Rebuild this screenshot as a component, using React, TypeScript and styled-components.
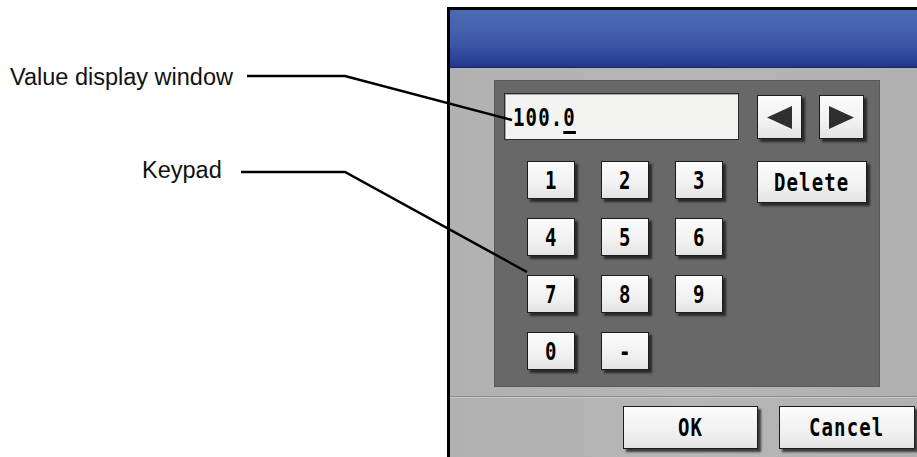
import styled, { createGlobalStyle } from "styled-components";

const GlobalStyle = createGlobalStyle`
  html, body {
    margin: 0;
    padding: 0;
    background: #ffffff;
  }
`;

const Page = styled.div`
  position: relative;
  display: flex;
  width: 917px;
  height: 457px;
  overflow: hidden;
  background: #ffffff;
`;

const LabelColumn = styled.div`
  display: flex;
  flex-direction: column;
  flex-shrink: 0;
  width: 447px;
  padding-top: 64px;
  box-sizing: border-box;
`;

const Label = styled.div<{ $indent: number; $gap?: number }>`
  margin-left: ${(p) => p.$indent}px;
  margin-top: ${(p) => p.$gap ?? 0}px;
  font-family: "Liberation Sans", Arial, sans-serif;
  font-size: 23.5px;
  line-height: 26px;
  color: #111111;
`;

const Leaders = styled.svg`
  position: absolute;
  left: 0;
  top: 0;
  pointer-events: none;
`;

const Device = styled.div`
  flex-shrink: 0;
  display: flex;
  flex-direction: column;
  width: 480px;
  height: 470px;
  margin-top: 7px;
  border-left: 3px solid #000000;
  border-top: 3px solid #000000;
  background: linear-gradient(90deg, #b1b1b1, #b6b6b6 50%, #b0b0b0);
`;

const Header = styled.div`
  height: 57px;
  background: linear-gradient(
    180deg,
    #4b6ab3 0%,
    #4462ae 35%,
    #3a53a3 65%,
    #23368f 100%
  );
  border-bottom: 1px solid #1b2660;
`;

const Body = styled.div`
  padding: 12px 0 0 44px;
`;

const Panel = styled.div`
  width: 386px;
  height: 307px;
  box-sizing: border-box;
  padding: 12px 0 0 9px;
  background: #686868;
  border: 1px solid #595959;
`;

const TopRow = styled.div`
  display: flex;
  align-items: flex-start;
  gap: 17px;
`;

// condensed LCD-style lettering used on the panel
const Glyphs = styled.span<{ $origin?: string }>`
  display: inline-block;
  font-family: "DejaVu Sans Mono", monospace;
  font-weight: bold;
  font-size: 25px;
  letter-spacing: 1.5px;
  white-space: pre;
  color: #000000;
  transform: scaleX(0.76);
  transform-origin: ${(p) => p.$origin ?? "center"};
`;

const ValueWindow = styled.div`
  display: flex;
  align-items: center;
  width: 235px;
  height: 47px;
  box-sizing: border-box;
  margin-right: 1px;
  padding: 2px 0 0 8px;
  background: #f3f4f2;
  border: 1px solid #2a2a2a;
  box-shadow: inset 1px 1px 0 #a8a8a8;
`;

const Cursor = styled.span`
  text-decoration: underline;
  text-decoration-thickness: 3px;
  text-underline-offset: 5px;
`;

const Key = styled.button<{ $w?: number; $h?: number }>`
  display: flex;
  align-items: center;
  justify-content: center;
  width: ${(p) => p.$w ?? 48}px;
  height: ${(p) => p.$h ?? 38}px;
  padding: 0;
  box-sizing: border-box;
  background: linear-gradient(180deg, #fbfbfb 0%, #f1f1f1 60%, #e3e3e3 100%);
  border: 1px solid #1c1c1c;
  border-radius: 0;
  box-shadow: 3px 3px 2px rgba(20, 20, 20, 0.75);
`;

const ArrowKey = styled(Key)`
  margin-top: 2px;
`;

const Keypad = styled.div`
  display: grid;
  grid-template-columns: 48px 48px 48px 118px;
  grid-auto-rows: 39px;
  column-gap: 26px;
  row-gap: 18px;
  margin: 21px 0 0 23px;
`;

const DeleteKey = styled(Key)`
  justify-self: end;
  align-self: start;
`;

const Separator = styled.div`
  margin-top: 9px;
  height: 0;
  border-top: 1px solid #8c8c8c;
  border-bottom: 1px solid #c8c8c8;
`;

const Footer = styled.div`
  display: flex;
  gap: 21px;
  padding: 8px 0 0 173px;
`;

function Triangle({ dir }: { dir: "left" | "right" }) {
  const points = dir === "left" ? "25,0 25,23 0,11.5" : "0,0 0,23 25,11.5";
  return (
    <svg width="25" height="23" viewBox="0 0 25 23">
      <polygon points={points} fill="#2f2f2f" />
    </svg>
  );
}

const digits = ["1", "2", "3", "4", "5", "6", "7", "8", "9", "0", "-"];

export default function App() {
  return (
    <>
      <GlobalStyle />
      <Page>
        <LabelColumn>
          <Label $indent={10}>Value display window</Label>
          <Label $indent={142} $gap={67}>
            Keypad
          </Label>
        </LabelColumn>
        <Device>
          <Header />
          <Body>
            <Panel>
              <TopRow>
                <ValueWindow>
                  <Glyphs $origin="left">
                    100.<Cursor>0</Cursor>
                  </Glyphs>
                </ValueWindow>
                <ArrowKey $w={45} $h={44}>
                  <Triangle dir="left" />
                </ArrowKey>
                <ArrowKey $w={45} $h={44}>
                  <Triangle dir="right" />
                </ArrowKey>
              </TopRow>
              <Keypad>
                {digits.slice(0, 3).map((d) => (
                  <Key key={d}>
                    <Glyphs>{d}</Glyphs>
                  </Key>
                ))}
                <DeleteKey $w={110} $h={42}>
                  <Glyphs>Delete</Glyphs>
                </DeleteKey>
                {digits.slice(3, 6).map((d) => (
                  <Key key={d}>
                    <Glyphs>{d}</Glyphs>
                  </Key>
                ))}
                <span />
                {digits.slice(6, 9).map((d) => (
                  <Key key={d}>
                    <Glyphs>{d}</Glyphs>
                  </Key>
                ))}
                <span />
                {digits.slice(9).map((d) => (
                  <Key key={d}>
                    <Glyphs>{d}</Glyphs>
                  </Key>
                ))}
              </Keypad>
            </Panel>
          </Body>
          <Separator />
          <Footer>
            <Key $w={135} $h={43}>
              <Glyphs>OK</Glyphs>
            </Key>
            <Key $w={136} $h={43}>
              <Glyphs>Cancel</Glyphs>
            </Key>
          </Footer>
        </Device>
        <Leaders width="917" height="457" viewBox="0 0 917 457">
          <polyline
            points="247,76 345,76 512,120"
            fill="none"
            stroke="#000"
            strokeWidth="2.5"
          />
          <polyline
            points="241,172 345,172 527,272"
            fill="none"
            stroke="#000"
            strokeWidth="2.5"
          />
        </Leaders>
      </Page>
    </>
  );
}
